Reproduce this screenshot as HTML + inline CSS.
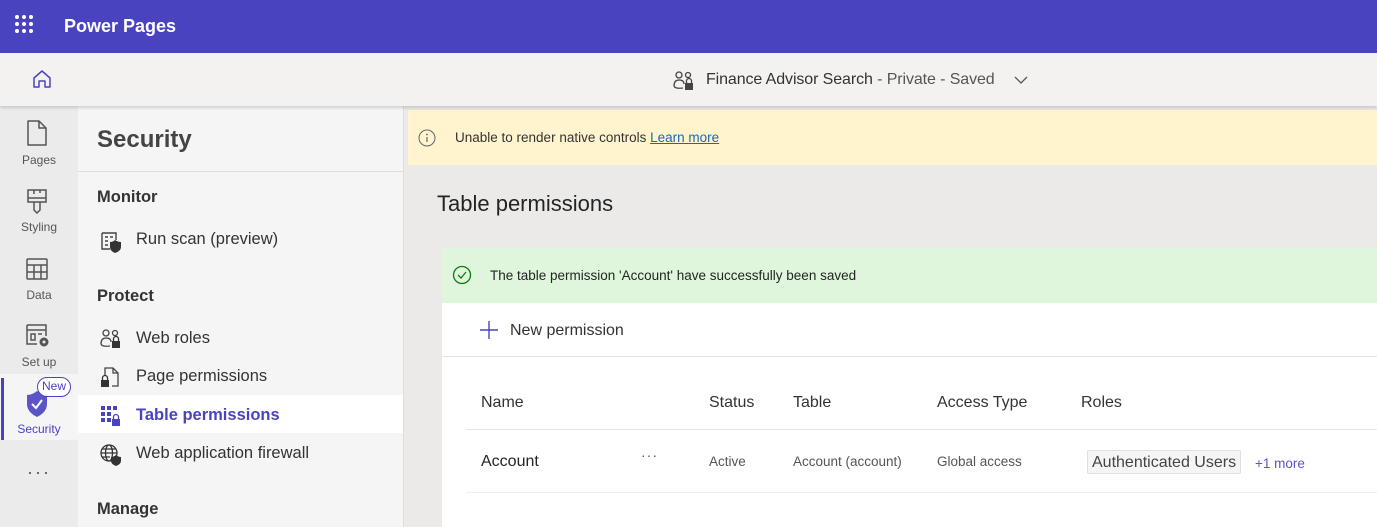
<!DOCTYPE html>
<html><head><meta charset="utf-8"><style>
*{margin:0;padding:0;box-sizing:border-box}
body{width:1377px;height:527px;overflow:hidden;font-family:"Liberation Sans",sans-serif;background:#ebebeb;position:relative;color:#242424}
.a{position:absolute}
.top{left:0;top:0;width:1377px;height:53px;background:#4a43c0}
.bar2{left:0;top:53px;width:1377px;height:53px;background:#f3f2f1;box-shadow:0 2px 3px rgba(0,0,0,.15);z-index:2}
.rail{left:0;top:106px;width:78px;height:421px;background:#ebebeb}
.ri{position:absolute;left:0;width:78px;text-align:center;font-size:12px;color:#555}
.panel{left:78px;top:106px;width:326px;height:421px;background:#f5f5f5;border-right:1px solid #ddd}
.pi{position:absolute;left:58px;font-size:16.5px;color:#333}
.ph{position:absolute;left:19px;font-size:16.5px;color:#333;font-weight:bold}
.ic{position:absolute;left:22px}
</style></head><body>
<div class="a top">
 <svg class="a" style="left:14px;top:15px" width="22" height="22"><g fill="#fff"><circle cx="3" cy="2" r="2"/><circle cx="10" cy="2" r="2"/><circle cx="17" cy="2" r="2"/><circle cx="3" cy="9" r="2"/><circle cx="10" cy="9" r="2"/><circle cx="17" cy="9" r="2"/><circle cx="3" cy="16" r="2"/><circle cx="10" cy="16" r="2"/><circle cx="17" cy="16" r="2"/></g></svg>
 <div class="a" style="left:64px;top:16px;color:#fff;font-size:18px;font-weight:bold">Power Pages</div>
</div>
<div class="a bar2">
 <svg class="a" style="left:32px;top:16px" width="20" height="20"><path d="M2 9 L10 2 L18 9 V18 H13 V12 H7 V18 H2 Z" fill="none" stroke="#4a43c0" stroke-width="1.5" stroke-linejoin="round"/></svg>
 <svg class="a" style="left:673px;top:17px" width="24" height="24"><g fill="none" stroke="#444" stroke-width="1.3"><circle cx="6" cy="5" r="3"/><circle cx="15" cy="5" r="2.5"/><path d="M1 16 Q1 10 6 10 Q11 10 11 14 M1 16 Q2 19 10 18"/></g><rect x="12" y="13" width="8" height="7" fill="#444"/><path d="M13.5 13 V11 a2.5 2.5 0 0 1 5 0 V13" fill="none" stroke="#444" stroke-width="1.3"/></svg>
 <div class="a" style="left:706px;top:18px;font-size:16px;color:#333;letter-spacing:-0.1px">Finance Advisor Search <span style="color:#555">- Private - Saved</span></div>
 <svg class="a" style="left:1014px;top:22px" width="14" height="10"><path d="M1 2 L7 8 L13 2" fill="none" stroke="#555" stroke-width="1.3"/></svg>
</div>
<div class="a rail">
 <svg class="a" style="left:25px;top:14px" width="24" height="26"><path d="M3 1 H14 L21 8 V25 H3 Z M14 1 V8 H21" fill="none" stroke="#555" stroke-width="1.5" stroke-linejoin="round"/></svg>
 <div class="ri" style="top:47px">Pages</div>
 <svg class="a" style="left:26px;top:82px" width="22" height="26"><path d="M2 2 H20 V14 H2 Z M2 10 H20 M8 14 V22 L11 25 L14 22 V14 M8 2 V6 M14 2 V5" fill="none" stroke="#555" stroke-width="1.5"/></svg>
 <div class="ri" style="top:114px">Styling</div>
 <svg class="a" style="left:25px;top:151px" width="24" height="24"><path d="M2 3 Q2 2 3 2 H21 Q22 2 22 3 V21 Q22 22 21 22 H3 Q2 22 2 21 Z M2 8 H22 M2 15 H22 M9 8 V22 M16 8 V22" fill="none" stroke="#555" stroke-width="1.5"/></svg>
 <div class="ri" style="top:182px">Data</div>
 <svg class="a" style="left:25px;top:217px" width="26" height="26"><path d="M2 2 H21 V13 M2 2 V21 H12 M2 7 H21 M6 11 H10 V17 H6 Z M13 11 H17" fill="none" stroke="#555" stroke-width="1.5"/><circle cx="19" cy="19" r="4.5" fill="#555"/><circle cx="19" cy="19" r="1.5" fill="#ebebeb"/></svg>
 <div class="ri" style="top:249px">Set up</div>
 <div class="a" style="left:0;top:268px;width:78px;height:66px;background:#f5f5f5"></div>
 <div class="a" style="left:1px;top:272px;width:3px;height:62px;background:#4a43c0"></div>
 <svg class="a" style="left:25px;top:284px" width="24" height="28"><path d="M12 1 Q17 5 22 5 V14 Q22 22 12 27 Q2 22 2 14 V5 Q7 5 12 1 Z" fill="#5b54c9"/><path d="M7 14 L11 18 L17 10" fill="none" stroke="#fff" stroke-width="2"/></svg>
 <div class="a" style="left:37px;top:271px;width:34px;height:20px;border:1.5px solid #4a43c0;border-radius:10px;background:#fff;font-size:12px;color:#4a43c0;text-align:center;line-height:17px">New</div>
 <div class="ri" style="top:316px;color:#4a43c0">Security</div>
 <div class="ri" style="top:356px;font-size:18px;letter-spacing:2px;color:#555">···</div>
</div>
<div class="a panel">
 <div class="a" style="left:19px;top:20px;font-size:24px;font-weight:bold;color:#444">Security</div>
 <div class="a" style="left:0;top:65px;width:325px;height:1px;background:#ddd"></div>
 <div class="ph" style="top:82px">Monitor</div>
 <svg class="ic" style="top:125px" width="22" height="22"><path d="M2 2 H16 V9 M2 2 V18 H10 M5 6 H8 M10 6 H13 M5 10 H8 M5 14 H8" fill="none" stroke="#444" stroke-width="1.4"/><path d="M15 9 Q18 11 21 11 V16 Q21 20 15 22 Q10 20 10 16 V11 Q13 11 15 9Z" fill="#333"/></svg>
 <div class="pi" style="top:124px">Run scan (preview)</div>
 <div class="ph" style="top:181px">Protect</div>
 <svg class="ic" style="top:222px" width="22" height="22"><g fill="none" stroke="#444" stroke-width="1.3"><circle cx="6" cy="5" r="3"/><circle cx="15" cy="5" r="2.5"/><path d="M1 16 Q1 10 6 10 Q11 10 11 14 M1 16 Q2 19 10 18"/></g><rect x="12" y="13" width="8" height="7" fill="#333"/><path d="M13.5 13 V11 a2.5 2.5 0 0 1 5 0 V13" fill="none" stroke="#333" stroke-width="1.3"/></svg>
 <div class="pi" style="top:223px">Web roles</div>
 <svg class="ic" style="top:261px" width="22" height="22"><path d="M5 8 V1 H13 L18 6 V19 H12 M13 1 V6 H18" fill="none" stroke="#444" stroke-width="1.3"/><rect x="1" y="13" width="8" height="7" fill="#333"/><path d="M2.5 13 V11 a2.5 2.5 0 0 1 5 0 V13" fill="none" stroke="#333" stroke-width="1.3"/></svg>
 <div class="pi" style="top:261px">Page permissions</div>
 <div class="a" style="left:0;top:289px;width:325px;height:38px;background:#fff"></div>
 <svg class="ic" style="top:299px" width="22" height="22"><g fill="#4a43c0"><rect x="1" y="1" width="4" height="4"/><rect x="7" y="1" width="4" height="4"/><rect x="13" y="1" width="4" height="4"/><rect x="1" y="7" width="4" height="4"/><rect x="7" y="7" width="4" height="4"/><rect x="1" y="13" width="4" height="4"/><rect x="7" y="13" width="4" height="4"/><rect x="12" y="14" width="8" height="7"/></g><path d="M13.5 14 V12 a2.5 2.5 0 0 1 5 0 V14" fill="none" stroke="#4a43c0" stroke-width="1.3"/></svg>
 <div class="pi" style="top:300px;color:#4a43c0;font-weight:bold">Table permissions</div>
 <svg class="ic" style="top:338px" width="22" height="22"><g fill="none" stroke="#333" stroke-width="1.3"><circle cx="9" cy="9" r="8"/><ellipse cx="9" cy="9" rx="3.5" ry="8"/><path d="M1 9 H17 M2 5 H16 M2 13 H10"/></g><path d="M16 11 Q18.5 13 21 13 V17 Q21 20 16 22 Q11 20 11 17 V13 Q13.5 13 16 11Z" fill="#333"/></svg>
 <div class="pi" style="top:338px">Web application firewall</div>
 <div class="ph" style="top:394px">Manage</div>
</div>
<div class="a" style="left:405px;top:106px;width:972px;height:421px;background:#ebeae9"></div>
<div class="a" style="left:408px;top:110px;width:969px;height:55px;background:#fff4ce">
 <svg class="a" style="left:10px;top:19px" width="18" height="18"><circle cx="9" cy="9" r="8" fill="none" stroke="#666" stroke-width="1"/><path d="M9 8 V13" stroke="#666" stroke-width="1.2"/><circle cx="9" cy="5.5" r=".9" fill="#666"/></svg>
 <div class="a" style="left:47px;top:20px;font-size:13.5px;color:#333">Unable to render native controls <span style="color:#0f6cbd;text-decoration:underline">Learn more</span></div>
</div>
<div class="a" style="left:437px;top:191px;font-size:22px;color:#242424">Table permissions</div>
<div class="a" style="left:442px;top:248px;width:935px;height:279px;background:#fff">
 <div class="a" style="left:0;top:0;width:935px;height:55px;background:#dff6dd">
  <svg class="a" style="left:10px;top:17px" width="20" height="20"><circle cx="10" cy="10" r="8.5" fill="none" stroke="#107c10" stroke-width="1.3"/><path d="M6 10 L9 13 L14 7" fill="none" stroke="#107c10" stroke-width="1.3"/></svg>
  <div class="a" style="left:48px;top:20px;font-size:13.5px;color:#242424">The table permission 'Account' have successfully been saved</div>
 </div>
 <svg class="a" style="left:38px;top:72px" width="18" height="20"><path d="M9 1 V19 M0 10 H18" stroke="#4a43c0" stroke-width="1.4"/></svg>
 <div class="a" style="left:68px;top:74px;font-size:16px;color:#333">New permission</div>
 <div class="a" style="left:0;top:108px;width:935px;height:1px;background:#e5e5e5"></div>
 <div class="a" style="left:39px;top:146px;font-size:16px;color:#333">Name</div>
 <div class="a" style="left:267px;top:146px;font-size:16px;color:#333">Status</div>
 <div class="a" style="left:351px;top:146px;font-size:16px;color:#333">Table</div>
 <div class="a" style="left:495px;top:146px;font-size:16px;color:#333">Access Type</div>
 <div class="a" style="left:639px;top:146px;font-size:16px;color:#333">Roles</div>
 <div class="a" style="left:24px;top:181px;width:911px;height:1px;background:#e5e5e5"></div>
 <div class="a" style="left:39px;top:205px;font-size:16px;color:#242424">Account</div>
 <div class="a" style="left:199px;top:199px;font-size:14px;color:#555;letter-spacing:1px">···</div>
 <div class="a" style="left:267px;top:206px;font-size:13.5px;color:#555">Active</div>
 <div class="a" style="left:351px;top:206px;font-size:13.5px;color:#555">Account (account)</div>
 <div class="a" style="left:495px;top:206px;font-size:13.5px;color:#555">Global access</div>
 <div class="a" style="left:645px;top:202px;height:24px;padding:0 4px;border:1px solid #e0e0e0;background:#f5f5f5;border-radius:2px;font-size:16px;color:#444;line-height:23px">Authenticated Users</div>
 <div class="a" style="left:813px;top:208px;font-size:13.5px;color:#5b54c9">+1 more</div>
 <div class="a" style="left:24px;top:244px;width:911px;height:1px;background:#eee"></div>
</div>
</body></html>
